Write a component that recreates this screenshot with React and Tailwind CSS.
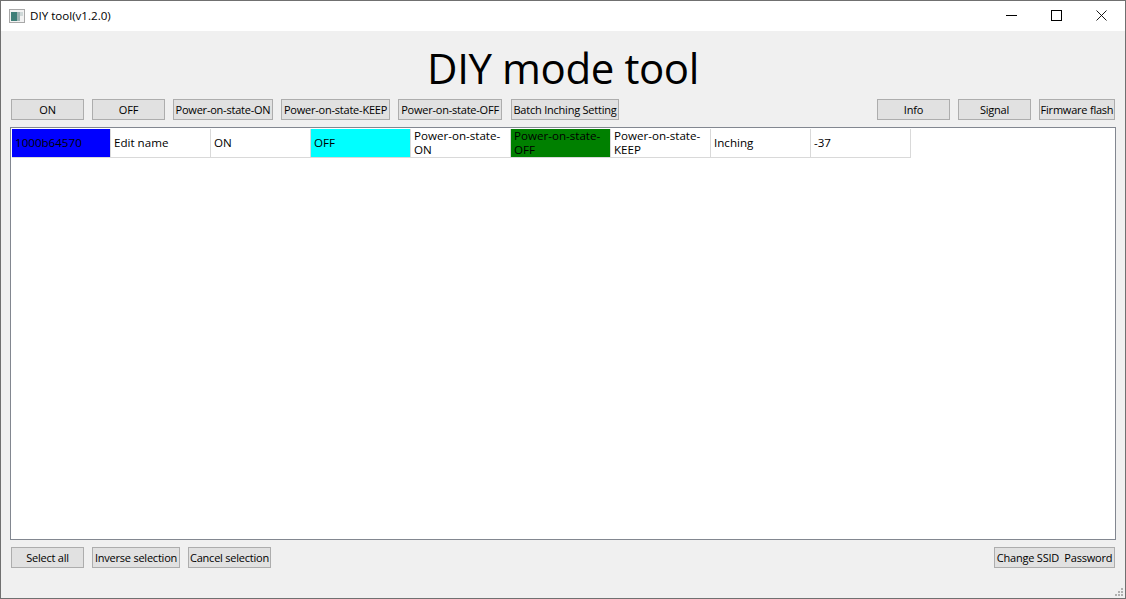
const FONT = "font-['Open_Sans','Noto_Sans',sans-serif]";

function Btn({ w, children, extra = "" }) {
  return (
    <button className={`${w} ${extra} h-[21px] shrink-0 flex items-center justify-center whitespace-nowrap border border-[#adadad] bg-[#e1e1e1] text-[11px] leading-none tracking-[-0.22px] text-black`}>
      {children}
    </button>
  );
}

function Cell({ bg = "bg-white", w = "w-[100px]", children }) {
  return (
    <div className={`${w} h-[29px] shrink-0 border-r border-b border-[#d9d9d9] flex items-center pl-[3px] pr-[2px] text-[11.6px] leading-[14px] text-black ${bg}`}>
      <span className="block">{children}</span>
    </div>
  );
}

export default function App() {
  return (
    <div className={`${FONT} relative w-[1126px] h-[599px] flex flex-col border border-[#707070] bg-[#f0f0f0] overflow-hidden`}>
      <div className="h-[30px] shrink-0 bg-white flex items-center">
        <svg className="ml-[8px] shrink-0" width="16" height="14" viewBox="0 0 16 14">
          <rect x="0.5" y="0.5" width="15" height="13" fill="#f2f2f2" stroke="#a8a8a8" />
          <rect x="2" y="3" width="6" height="9" fill="#3f7f78" />
          <rect x="8" y="3" width="3" height="9" fill="#9fb4b4" />
          <rect x="11" y="3" width="3" height="4" fill="#cfd8d8" />
        </svg>
        <span className="ml-[5px] text-[11.6px] text-black">DIY tool(v1.2.0)</span>
        <div className="ml-auto flex items-center h-full mr-px pb-px">
          <div className="w-[45px] flex justify-center">
            <svg width="11" height="11" viewBox="0 0 11 11"><path d="M0 5.5H11" stroke="#000" strokeWidth="1" /></svg>
          </div>
          <div className="w-[45px] flex justify-center">
            <svg width="11" height="11" viewBox="0 0 11 11"><rect x="0.5" y="0.5" width="10" height="10" fill="none" stroke="#000" /></svg>
          </div>
          <div className="w-[45px] flex justify-center">
            <svg width="11" height="11" viewBox="0 0 11 11"><path d="M0.5 0.5L10.5 10.5M10.5 0.5L0.5 10.5" stroke="#000" strokeWidth="0.9" /></svg>
          </div>
        </div>
      </div>

      <div className="flex-1 flex flex-col pl-[9px] pr-[9px]">
        <div className="h-[68px] shrink-0 flex items-center justify-center pt-[5px] text-[42px] leading-none text-black tracking-[-0.4px]">
          DIY mode tool
        </div>

        <div className="flex h-[21px] shrink-0 pl-px pr-px">
          <div className="flex gap-[8px]">
            <Btn w="w-[73px]">ON</Btn>
            <Btn w="w-[73px]">OFF</Btn>
            <Btn w="w-[100px]">Power-on-state-ON</Btn>
            <Btn w="w-[109px]">Power-on-state-KEEP</Btn>
            <Btn w="w-[104px]">Power-on-state-OFF</Btn>
            <Btn w="w-[108px]" extra="ml-px">Batch Inching Setting</Btn>
          </div>
          <div className="ml-auto flex gap-[8px]">
            <Btn w="w-[73px]">Info</Btn>
            <Btn w="w-[73px]">Signal</Btn>
            <Btn w="w-[76px]">Firmware flash</Btn>
          </div>
        </div>

        <div className="mt-[7px] h-[413px] shrink-0 border border-[#828790] bg-white pt-px pl-px">
          <div className="flex">
            <Cell bg="bg-[#0000ff]" w="w-[99px]">1000b64570</Cell>
            <Cell>Edit name</Cell>
            <Cell>ON</Cell>
            <Cell bg="bg-[#00ffff]">OFF</Cell>
            <Cell>Power-on-state-ON</Cell>
            <Cell bg="bg-[#008000]">Power-on-state-OFF</Cell>
            <Cell>Power-on-state-KEEP</Cell>
            <Cell>Inching</Cell>
            <Cell>-37</Cell>
          </div>
        </div>

        <div className="mt-[7px] flex h-[21px] shrink-0 pl-px pr-px">
          <div className="flex gap-[8px]">
            <Btn w="w-[73px]">Select all</Btn>
            <Btn w="w-[88px]">Inverse selection</Btn>
            <Btn w="w-[83px]">Cancel selection</Btn>
          </div>
          <div className="ml-auto">
            <Btn w="w-[121px]">Change SSID&nbsp;&nbsp;Password</Btn>
          </div>
        </div>
      </div>

      <svg className="absolute right-[1px] bottom-[1px]" width="10" height="10" viewBox="0 0 10 10" fill="#b0b0b0">
        <rect x="7" y="1" width="2" height="2" />
        <rect x="4" y="4" width="2" height="2" />
        <rect x="7" y="4" width="2" height="2" />
        <rect x="1" y="7" width="2" height="2" />
        <rect x="4" y="7" width="2" height="2" />
        <rect x="7" y="7" width="2" height="2" />
      </svg>
    </div>
  );
}
